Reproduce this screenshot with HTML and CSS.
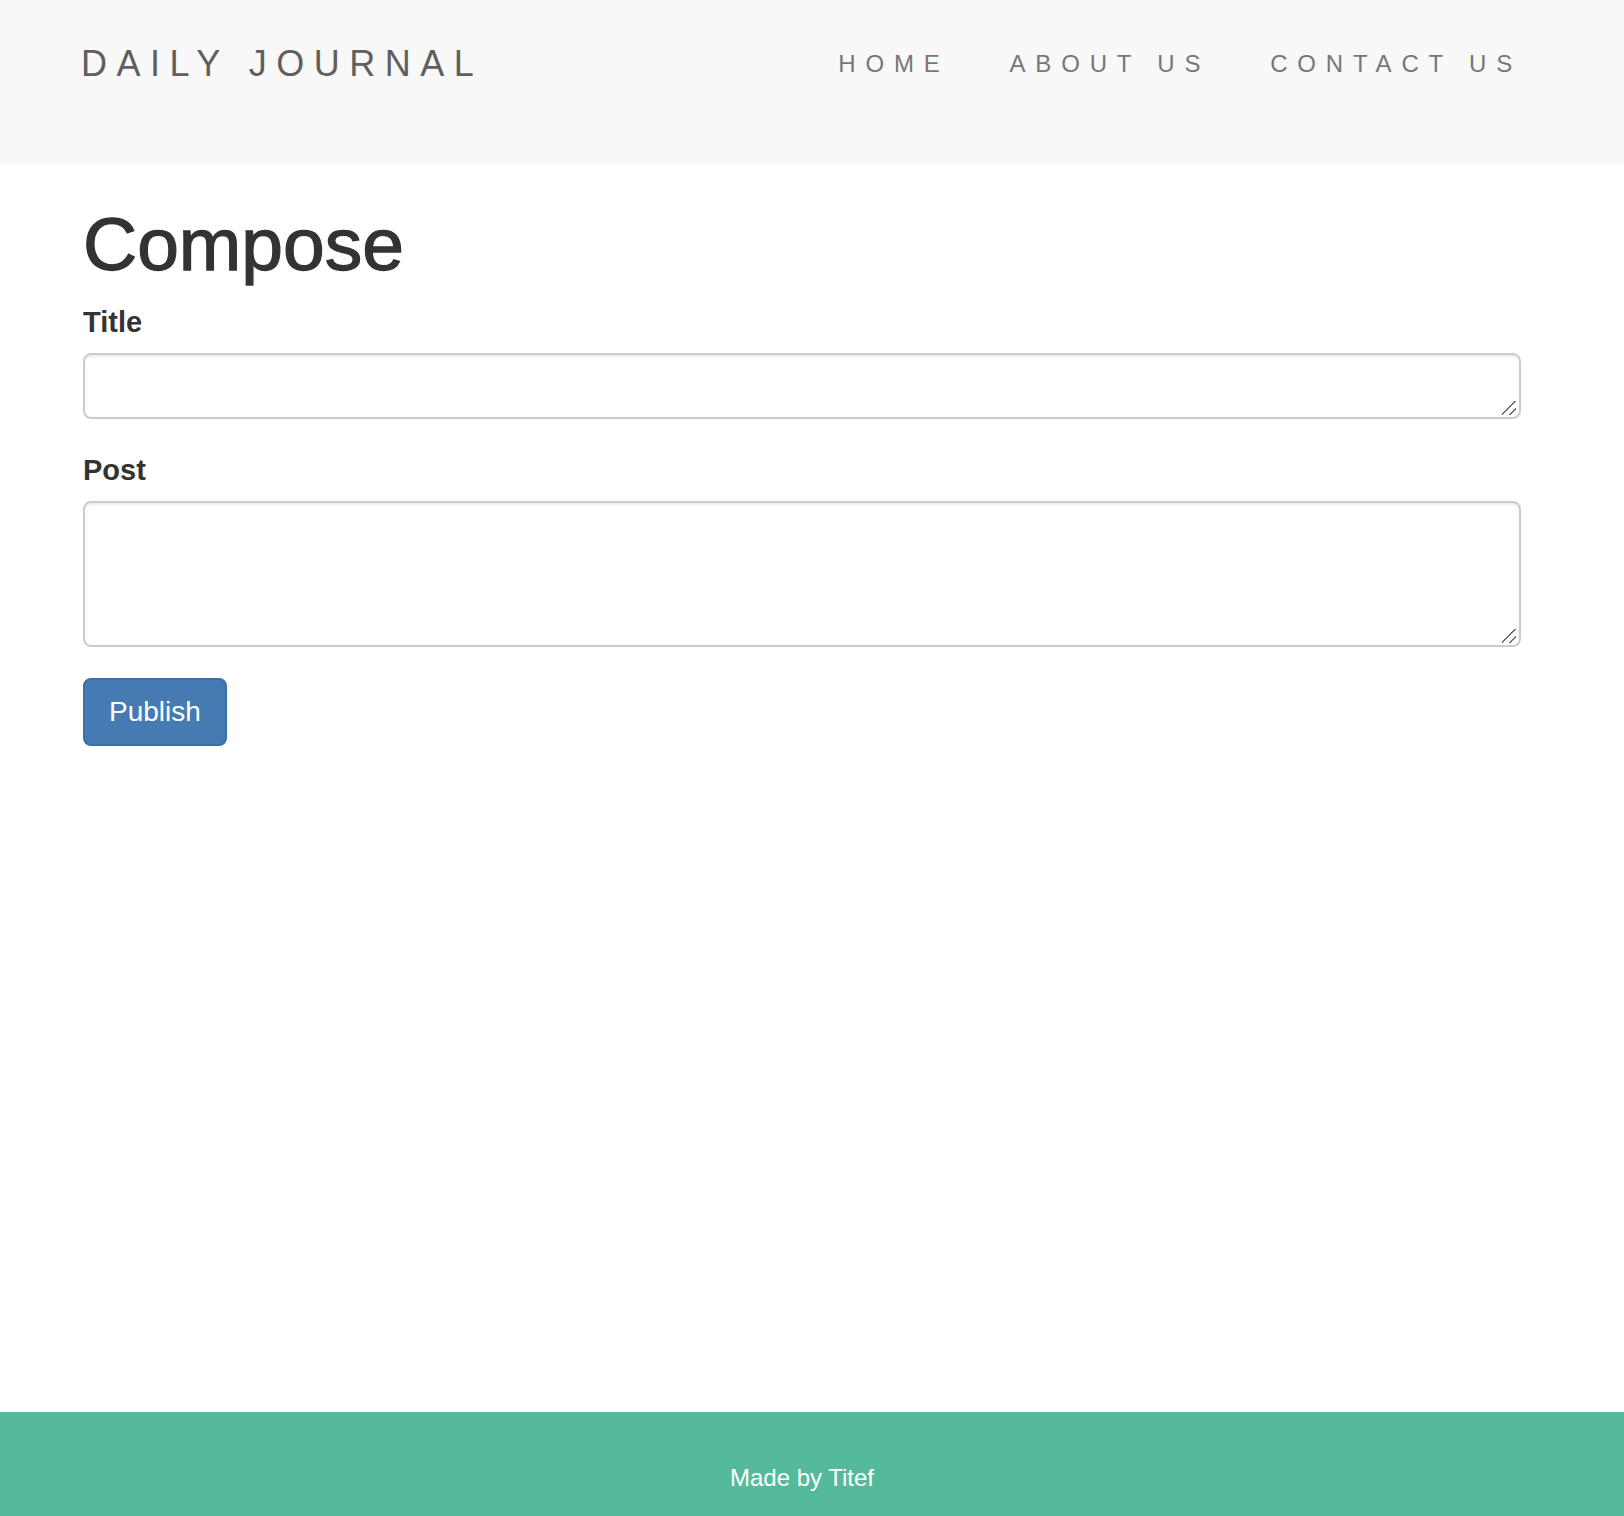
FILE: index.html
```html
<!DOCTYPE html>
<html lang="en">
<head>
<meta charset="utf-8">
<title>Daily Journal</title>
<link rel="stylesheet" href="styles.css">
</head>
<body>
<header class="navbar">
  <a class="brand" href="#">DAILY JOURNAL</a>
  <nav class="nav">
    <a class="nav-link" href="#">HOME</a>
    <a class="nav-link" href="#">ABOUT US</a>
    <a class="nav-link" href="#">CONTACT US</a>
  </nav>
</header>
<main class="content">
  <h1 class="page-title">Compose</h1>
  <form class="compose-form">
    <div class="form-group">
      <label class="field-label" for="title">Title</label>
      <textarea id="title" class="form-control title-input"></textarea>
    </div>
    <div class="form-group">
      <label class="field-label" for="post">Post</label>
      <textarea id="post" class="form-control post-input"></textarea>
    </div>
    <button class="btn-primary" type="button">Publish</button>
  </form>
</main>
<footer class="footer">
  <p class="footer-text">Made by Titef</p>
</footer>
</body>
</html>
```

FILE: styles.css
```css
* {
  box-sizing: border-box;
}

html, body {
  margin: 0;
  padding: 0;
}

body {
  min-height: 100vh;
  display: flex;
  flex-direction: column;
  font-family: "Liberation Sans", Arial, sans-serif;
  color: #333;
  background: #fff;
}

.navbar {
  height: 164px;
  background-color: #f8f8f8;
  display: flex;
  justify-content: space-between;
  align-items: flex-start;
  padding: 0 102px 0 81px;
}

.brand {
  margin-top: 46px;
  font-size: 36px;
  line-height: 36px;
  letter-spacing: 9.5px;
  color: #5f5f5f;
  text-decoration: none;
}

.nav {
  margin-top: 52px;
  display: flex;
  gap: 60px;
}

.nav-link {
  font-size: 24px;
  line-height: 24px;
  letter-spacing: 9.8px;
  color: #777;
  text-decoration: none;
}

.content {
  padding: 0 103px 0 83px;
}

.page-title {
  margin: 43px 0 0;
  font-size: 75px;
  line-height: 75px;
  font-weight: 400;
  color: #333;
  -webkit-text-stroke: 1.3px #333;
}

.compose-form {
  margin: 0;
}

.form-group {
  display: flex;
  flex-direction: column;
}

.field-label {
  margin-top: 26px;
  margin-bottom: 16px;
  font-size: 29px;
  line-height: 29px;
  font-weight: 700;
  color: #333;
}

.form-group + .form-group .field-label {
  margin-top: 37px;
}

.form-control {
  display: block;
  width: 100%;
  border: 2px solid #ccc;
  border-radius: 8px;
  box-shadow: inset 0 2px 2px rgba(0, 0, 0, 0.075);
  background-color: #fff;
  background-image: linear-gradient(135deg,
    transparent 46%, #6a6a6a 46%, #6a6a6a 53%, transparent 53%,
    transparent 72%, #6a6a6a 72%, #6a6a6a 79%, transparent 79%);
  background-repeat: no-repeat;
  background-size: 14px 14px;
  background-position: right 3px bottom 2px;
  resize: none;
  font-family: inherit;
  font-size: 28px;
  padding: 12px 24px;
  color: #555;
  margin: 0;
}

.title-input {
  height: 66px;
}

.post-input {
  height: 146px;
}

.btn-primary {
  display: block;
  margin-top: 31px;
  height: 68px;
  padding: 0 24px;
  font-family: inherit;
  font-size: 28px;
  line-height: 64px;
  color: #fff;
  background-color: #467ab3;
  border: 2px solid #3d6ea6;
  border-radius: 8px;
}

.footer {
  margin-top: auto;
  height: 104px;
  background-color: #55b99b;
  padding: 0 103px 0 83px;
}

.footer-text {
  margin: 54px 0 0;
  font-size: 24px;
  line-height: 24px;
  text-align: center;
  color: #fff;
}
```
